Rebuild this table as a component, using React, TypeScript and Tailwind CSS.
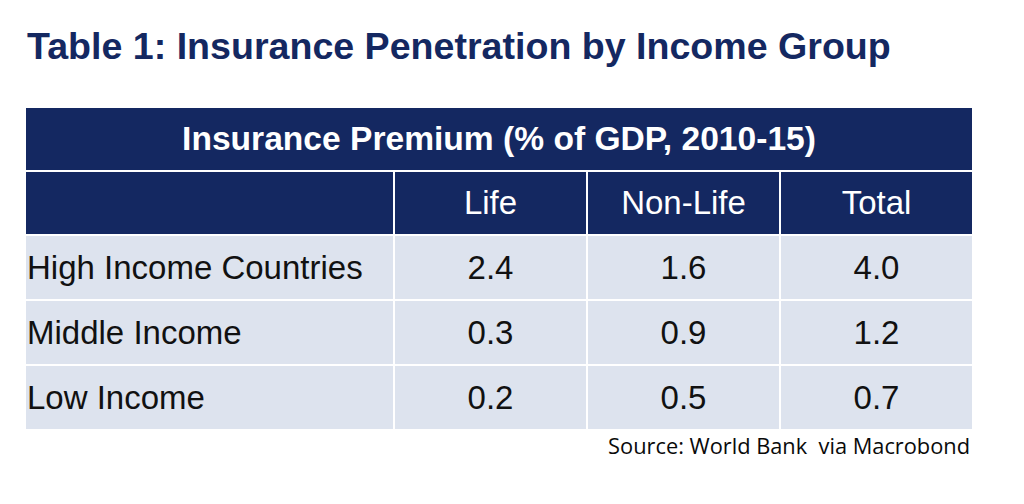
const NAVY = 'bg-[#142861]';

const ROWS = [
  { label: 'High Income Countries', life: '2.4', nonLife: '1.6', total: '4.0' },
  { label: 'Middle Income', life: '0.3', nonLife: '0.9', total: '1.2' },
  { label: 'Low Income', life: '0.2', nonLife: '0.5', total: '0.7' },
];

export default function App() {
  return (
    <div className="w-[1024px] h-[504px] bg-white px-[26px] pt-[28px] font-['Liberation_Sans',Arial,sans-serif]">
      <h1 className="text-[37.6px] leading-[37px] font-bold text-[#142861] pl-[1px]">
        Table 1: Insurance Penetration by Income Group
      </h1>

      <div className="mt-[43px] w-[946px] grid grid-cols-[367px_191px_191px_191px] gap-[2px] bg-white">
        <div className={`col-span-4 h-[62px] ${NAVY} flex items-center justify-center text-white font-bold text-[33.6px]`}>
          Insurance Premium (% of GDP, 2010-15)
        </div>

        <div className={`h-[62px] ${NAVY}`} />
        <div className={`h-[62px] ${NAVY} flex items-center justify-center text-white text-[33px]`}>Life</div>
        <div className={`h-[62px] ${NAVY} flex items-center justify-center text-white text-[33px]`}>Non-Life</div>
        <div className={`h-[62px] ${NAVY} flex items-center justify-center text-white text-[33px]`}>Total</div>

        {ROWS.map((row) => (
          <div key={row.label} className="contents">
            <div className="h-[63px] bg-[#dde3ee] flex items-center pl-[1px] text-[33px] text-[#111]">
              {row.label}
            </div>
            <div className="h-[63px] bg-[#dde3ee] flex items-center justify-center text-[33px] text-[#111]">
              {row.life}
            </div>
            <div className="h-[63px] bg-[#dde3ee] flex items-center justify-center text-[33px] text-[#111]">
              {row.nonLife}
            </div>
            <div className="h-[63px] bg-[#dde3ee] flex items-center justify-center text-[33px] text-[#111]">
              {row.total}
            </div>
          </div>
        ))}
      </div>

      <div className="w-[946px] flex justify-end mt-[2px] pr-[2px]">
        <span className="font-['Open_Sans',sans-serif] text-[21.8px] leading-[30px] text-[#0a0a0a]">
          Source: World Bank&nbsp; via Macrobond
        </span>
      </div>
    </div>
  );
}
